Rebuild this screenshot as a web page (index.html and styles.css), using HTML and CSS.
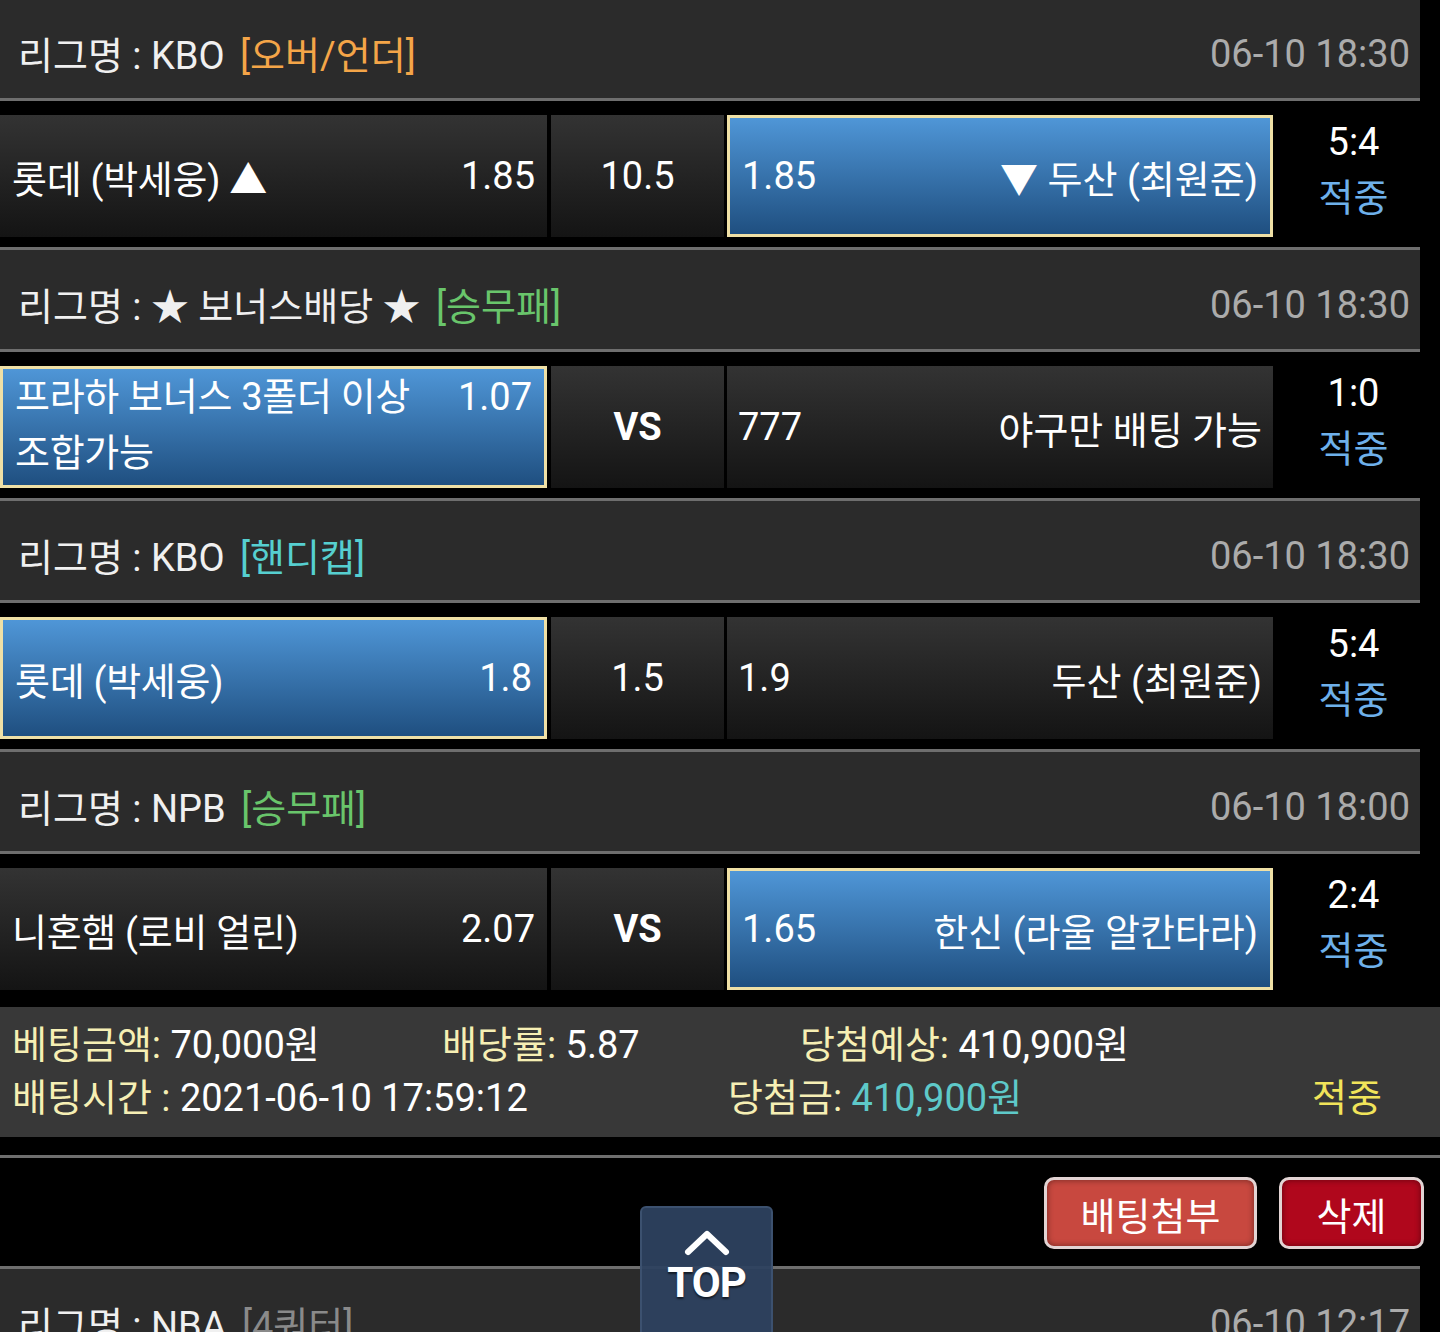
FILE: index.html
```html
<!DOCTYPE html>
<html lang="ko">
<head>
<meta charset="utf-8">
<title>배팅내역</title>
<link rel="stylesheet" href="styles.css">
</head>
<body>
<div class="page">
  <section class="game">
    <div class="league">
      <div class="lg-name">리그명 : KBO <span class="tag orange">[오버/언더]</span></div>
      <div class="lg-date">06-10 18:30</div>
    </div>
    <div class="row">
      <div class="cell side home"><span class="name">롯데 (박세웅) ▲</span><span class="odd">1.85</span></div>
      <div class="cell mid">10.5</div>
      <div class="cell side away sel"><span class="odd">1.85</span><span class="name">▼ 두산 (최원준)</span></div>
      <div class="result"><div class="score">5:4</div><div class="hit">적중</div></div>
    </div>
  </section>

  <section class="game">
    <div class="league">
      <div class="lg-name">리그명 : ★ 보너스배당 ★ <span class="tag green">[승무패]</span></div>
      <div class="lg-date">06-10 18:30</div>
    </div>
    <div class="row">
      <div class="cell side home sel multi"><span class="name">프라하 보너스 3폴더 이상<br>조합가능</span><span class="odd">1.07</span></div>
      <div class="cell mid vs">VS</div>
      <div class="cell side away"><span class="odd">777</span><span class="name">야구만 배팅 가능</span></div>
      <div class="result"><div class="score">1:0</div><div class="hit">적중</div></div>
    </div>
  </section>

  <section class="game">
    <div class="league">
      <div class="lg-name">리그명 : KBO <span class="tag cyan">[핸디캡]</span></div>
      <div class="lg-date">06-10 18:30</div>
    </div>
    <div class="row">
      <div class="cell side home sel"><span class="name">롯데 (박세웅)</span><span class="odd">1.8</span></div>
      <div class="cell mid">1.5</div>
      <div class="cell side away"><span class="odd">1.9</span><span class="name">두산 (최원준)</span></div>
      <div class="result"><div class="score">5:4</div><div class="hit">적중</div></div>
    </div>
  </section>

  <section class="game">
    <div class="league">
      <div class="lg-name">리그명 : NPB <span class="tag green">[승무패]</span></div>
      <div class="lg-date">06-10 18:00</div>
    </div>
    <div class="row">
      <div class="cell side home"><span class="name">니혼햄 (로비 얼린)</span><span class="odd">2.07</span></div>
      <div class="cell mid vs">VS</div>
      <div class="cell side away sel"><span class="odd">1.65</span><span class="name">한신 (라울 알칸타라)</span></div>
      <div class="result"><div class="score">2:4</div><div class="hit">적중</div></div>
    </div>
  </section>

  <div class="summary">
    <div class="sum-row">
      <span class="s1"><span class="lbl">베팅금액:</span> 70,000원</span>
      <span class="s2"><span class="lbl">배당률:</span> 5.87</span>
      <span><span class="lbl">당첨예상:</span> 410,900원</span>
    </div>
    <div class="sum-row">
      <span class="s3"><span class="lbl">배팅시간 :</span> 2021-06-10 17:59:12</span>
      <span class="s4"><span class="lbl">당첨금:</span> <span class="win">410,900원</span></span>
      <span class="status">적중</span>
    </div>
  </div>

  <div class="sep"></div>

  <div class="actions">
    <button class="btn attach">배팅첨부</button>
    <button class="btn delete">삭제</button>
  </div>

  <section class="game">
    <div class="league">
      <div class="lg-name">리그명 : NBA <span class="tag gray">[4쿼터]</span></div>
      <div class="lg-date">06-10 12:17</div>
    </div>
  </section>
</div>

<a class="top-btn" href="#">
  <svg class="top-arrow" width="46" height="28" viewBox="0 0 46 28"><polyline points="4,24 23,6 42,24" fill="none" stroke="#ffffff" stroke-width="6" stroke-linecap="round" stroke-linejoin="round"/></svg>
  <span class="top-text">TOP</span>
</a>
</body>
</html>
```

FILE: styles.css
```css
html, body {
  margin: 0;
  padding: 0;
  background: #000;
  height: 1332px;
  overflow: hidden;
}

body {
  font-family: Roboto, "Noto Sans CJK KR", sans-serif;
  font-size: 38px;
  color: #fff;
}

.page {
  margin-top: -4px;
}

.game {
  width: 1420px;
}

.league {
  box-sizing: border-box;
  height: 105px;
  border-top: 3px solid #6e6e6e;
  border-bottom: 3px solid #6e6e6e;
  background: #2b2b2b;
  display: flex;
  align-items: center;
  justify-content: space-between;
  padding: 7px 10px 0 18px;
}

.lg-name {
  color: #f0f0f0;
  white-space: nowrap;
}

.tag { margin-left: 6px; }
.orange { color: #f4a548; }
.green { color: #69c56b; }
.cyan { color: #56cfd0; }
.gray { color: #8a8a8a; }

.lg-date {
  color: #ababab;
  padding-top: 4px;
}

.row {
  display: flex;
  height: 122px;
  margin: 14px 0 10px;
}

.cell {
  box-sizing: border-box;
  height: 122px;
  background: linear-gradient(#333333, #141414);
  display: flex;
  align-items: center;
}

.side {
  width: 547px;
  justify-content: space-between;
  padding: 0 12px;
}

.away {
  width: 546px;
  padding: 0 11px;
}

.sel {
  background: linear-gradient(#4f96d7, #1f4f80);
  border: 3px solid #efe0a6;
  padding: 0 12px;
}

.name, .odd {
  white-space: nowrap;
}

.home .name {
  letter-spacing: -0.3px;
}

.mid {
  width: 173px;
  margin: 0 3px 0 4px;
  justify-content: center;
}

.vs {
  font-weight: 700;
}

.multi {
  align-items: flex-start;
  padding-top: 0;
  line-height: 56px;
}

.result {
  width: 147px;
  display: flex;
  flex-direction: column;
  justify-content: center;
  align-items: center;
  line-height: 56px;
  padding: 0 0 12px 14px;
  box-sizing: border-box;
}

.hit {
  color: #6eb0ea;
}

.summary {
  box-sizing: border-box;
  width: 1440px;
  height: 130px;
  margin-top: 17px;
  background: #383838;
  padding: 12px 0 12px 12px;
}

.sum-row {
  display: flex;
  line-height: 53px;
  white-space: nowrap;
}

.lbl { color: #f6efb4; }
.s1 { width: 430px; }
.s2 { width: 358px; }
.s3 { width: 716px; }
.s4 { width: 584px; }
.win { color: #5ec9c9; }
.status { color: #f1e45a; }

.sep {
  height: 3px;
  background: #6e6e6e;
  margin-top: 18px;
}

.actions {
  display: flex;
  justify-content: flex-end;
  gap: 22px;
  padding: 19px 16px 17px 0;
}

.btn {
  box-sizing: border-box;
  height: 72px;
  border: 3px solid #e2d4d4;
  border-radius: 10px;
  color: #fff;
  font-family: Roboto, "Noto Sans CJK KR", sans-serif;
  font-size: 38px;
  padding: 0;
  box-shadow: inset 0 0 6px rgba(0, 0, 0, 0.45);
}

.attach {
  width: 213px;
  background: #c8483f;
}

.delete {
  width: 145px;
  background: #b0071c;
}

.top-btn {
  position: absolute;
  left: 640px;
  top: 1206px;
  width: 133px;
  height: 140px;
  box-sizing: border-box;
  background: rgba(46, 66, 96, 0.94);
  border: 2px solid #3c516f;
  border-radius: 6px;
  display: flex;
  flex-direction: column;
  align-items: center;
  text-decoration: none;
}

.top-arrow {
  margin-top: 20px;
}

.top-text {
  font-family: Roboto, sans-serif;
  font-weight: 700;
  font-size: 42px;
  line-height: 42px;
  color: #fff;
  margin-top: 6px;
  letter-spacing: -1px;
  text-shadow: 0 2px 2px rgba(0, 0, 0, 0.6);
}
```
